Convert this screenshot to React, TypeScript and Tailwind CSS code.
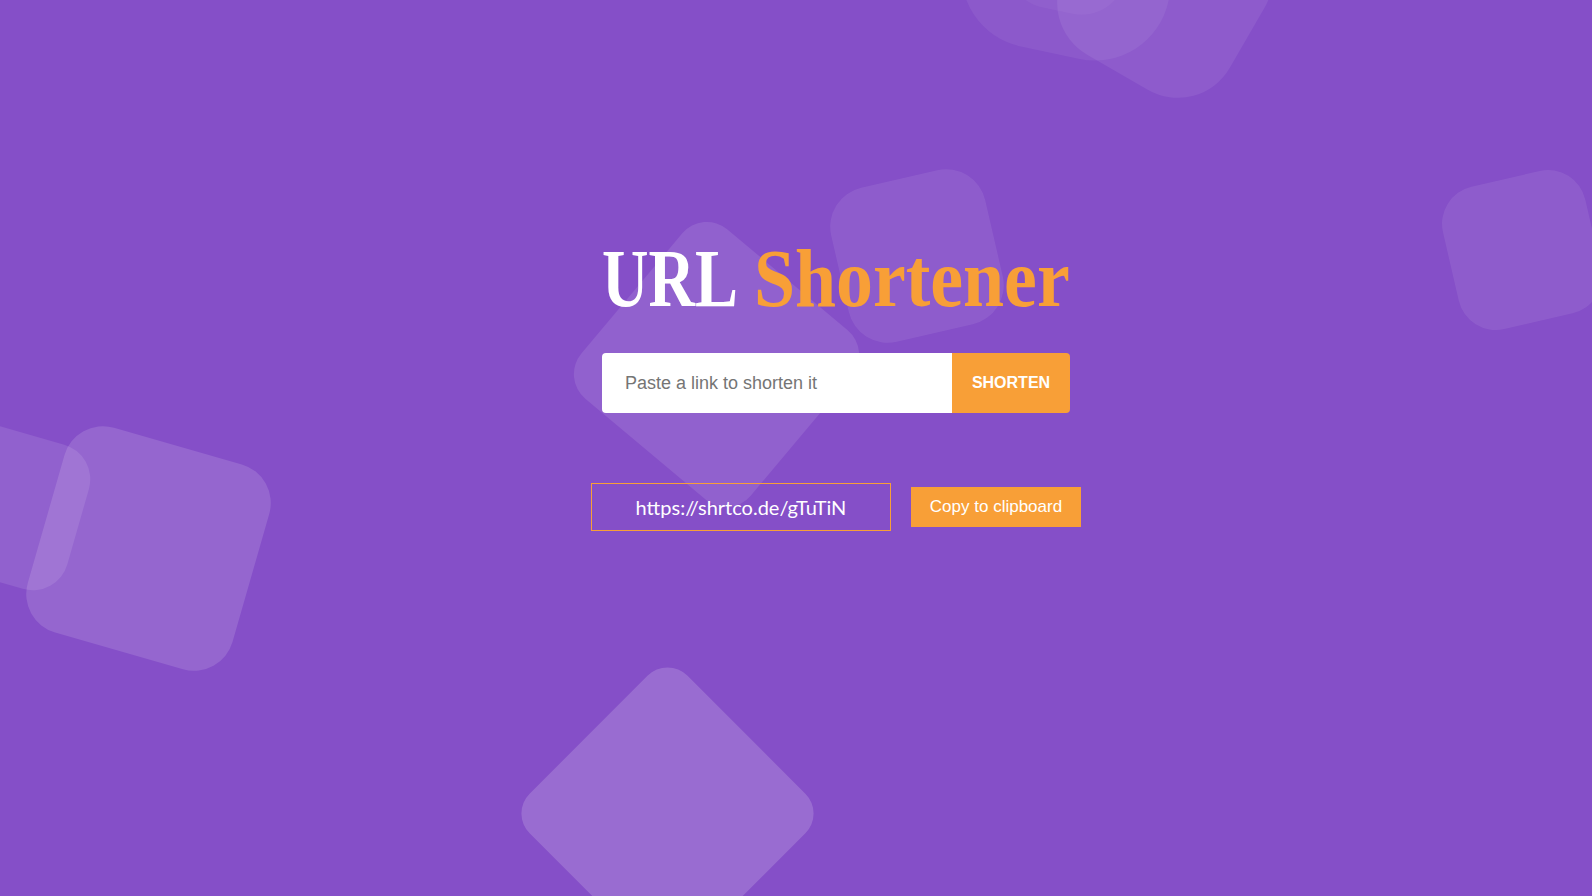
import React from "react";

// floating rounded squares behind the form
const shapes = [
	{ x: 1072, y: -50, s: 210, r: 75, rot: 12, o: "bg-white/[0.06]" },
	{ x: 1070, y: -48, s: 120, r: 45, rot: 12, o: "bg-white/[0.04]" },
	{ x: 1165, y: -10, s: 190, r: 60, rot: 30, o: "bg-white/[0.07]" },
	{ x: 716, y: 364, s: 221, r: 32, rot: 40, o: "bg-white/[0.1]" },
	{ x: 917, y: 256, s: 158, r: 40, rot: -13, o: "bg-white/[0.08]" },
	{ x: 1522, y: 250, s: 146, r: 38, rot: -13, o: "bg-white/[0.08]" },
	{ x: 148, y: 548, s: 213, r: 40, rot: 16, o: "bg-white/[0.13]" },
	{ x: 6, y: 506, s: 150, r: 36, rot: 16, o: "bg-white/[0.1]" },
	{ x: 667, y: 813, s: 223, r: 28, rot: 45, o: "bg-white/[0.17]" },
];

function Bubbles() {
	return (
		<>
			{shapes.map((b, i) => (
				<div
					key={i}
					className={"absolute " + b.o}
					style={{
						left: b.x - b.s / 2,
						top: b.y - b.s / 2,
						width: b.s,
						height: b.s,
						borderRadius: b.r,
						transform: `rotate(${b.rot}deg)`,
					}}
				/>
			))}
		</>
	);
}

export default function App() {
	return (
		<div className="relative w-full h-[896px] overflow-hidden bg-[#854fc8]">
			<Bubbles />

			<div className="relative z-10 flex flex-col items-center pl-[80px] pt-[238px]">
				{/* Title */}
				<h1 className="flex gap-[17px] text-[82px] leading-[82px] font-bold font-['Liberation_Serif',serif] whitespace-nowrap">
					<span className="w-[135px]">
						<span className="inline-block origin-left scale-x-[0.785] text-white">URL</span>
					</span>
					<span className="w-[316px]">
						<span className="inline-block origin-left scale-x-[0.9] text-[#f89f37]">Shortener</span>
					</span>
				</h1>

				{/* Shorten form */}
				<form className="mt-[33px] flex w-[468px] h-[60px] rounded-[4px] overflow-hidden font-['Liberation_Sans',Arial,sans-serif]">
					<input
						type="text"
						placeholder="Paste a link to shorten it"
						className="w-[350px] h-full bg-white pl-[23px] pr-3 text-[18px] text-[#333] placeholder:text-[#757575] outline-none"
					/>
					<button
						type="button"
						className="w-[118px] h-full bg-[#f89f37] text-white text-[16px] font-bold"
					>
						SHORTEN
					</button>
				</form>

				{/* Result */}
				<div className="mt-[70px] flex items-center gap-[20px]">
					<div className="w-[300px] h-[48px] border border-[#f89f37] flex items-center justify-center text-white text-[20px] font-['Lato',sans-serif]">
						https://shrtco.de/gTuTiN
					</div>
					<button
						type="button"
						className="w-[170px] h-[40px] bg-[#f89f37] text-white text-[17px] font-['Liberation_Sans',Arial,sans-serif]"
					>
						Copy to clipboard
					</button>
				</div>
			</div>
		</div>
	);
}
